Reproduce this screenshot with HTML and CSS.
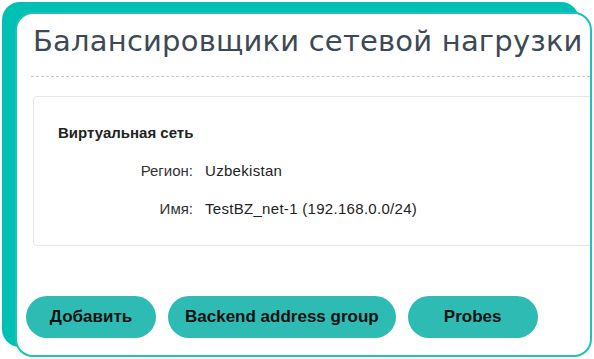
FILE: index.html
```html
<!DOCTYPE html>
<html lang="ru">
<head>
<meta charset="UTF-8" />
<title>Балансировщики сетевой нагрузки</title>
<link rel="stylesheet" href="styles.css">
</head>
<body>
<div class="wrap">
  <div class="card">
    <h1 class="title">Балансировщики сетевой нагрузки</h1>
    <div class="divider"></div>

    <div class="info-box">
      <div class="info-head">Виртуальная сеть</div>
      <div class="info-row">
        <span class="info-label">Регион:</span>
        <span class="info-value">Uzbekistan</span>
      </div>
      <div class="info-row">
        <span class="info-label">Имя:</span>
        <span class="info-value">TestBZ_net-1 (192.168.0.0/24)</span>
      </div>
    </div>

    <div class="actions">
      <button type="button" class="btn">Добавить</button>
      <button type="button" class="btn">Backend address group</button>
      <button type="button" class="btn">Probes</button>
    </div>
  </div>
</div>
</body>
</html>
```

FILE: styles.css
```css
/* base */
* {
  box-sizing: border-box;
}
body {
  margin: 0;
  background: #fff;
  font-family: 'Liberation Sans', Arial, sans-serif;
}
.wrap {
  padding: 12px 0 0 15px;
}
.card {
  width: 577px;
  height: 345px;
  background: #fff;
  border: 2px solid #1fc2b6;
  border-radius: 18px;
  box-shadow: -13px -10px 0 0 #00bfb3;
  overflow: hidden;
}
.title {
  margin: 10px 0 0 16px;
  font-family: 'DejaVu Sans', Verdana, sans-serif;
  font-weight: 400;
  font-size: 29px;
  letter-spacing: 0.2px;
  line-height: 35px;
  color: #3d4955;
  white-space: nowrap;
}
.divider {
  margin: 17px 0 0 14px;
  border-top: 1px dashed #c4c8cc;
}
.info-box {
  margin: 19px -30px 0 16px;
  height: 150px;
  border: 1px solid #e6e7e8;
  border-radius: 4px;
  padding: 27px 0 0 24px;
  font-size: 15px;
  color: #222;
}
.info-head {
  font-weight: 700;
  line-height: 18px;
}
.info-row {
  display: flex;
  gap: 12px;
  margin-top: 20px;
  line-height: 18px;
}
.info-label {
  width: 135px;
  text-align: right;
  color: #333;
}
.info-value {
  letter-spacing: 0.3px;
}
.actions {
  display: flex;
  gap: 12px;
  margin: 50px 0 0 9px;
}
.btn {
  height: 42px;
  min-width: 130px;
  padding: 0 17px;
  border: none;
  border-radius: 21px;
  background: #2dbbb3;
  color: #111;
  font-family: 'Liberation Sans', Arial, sans-serif;
  font-weight: 700;
  font-size: 17px;
  cursor: pointer;
}
```
